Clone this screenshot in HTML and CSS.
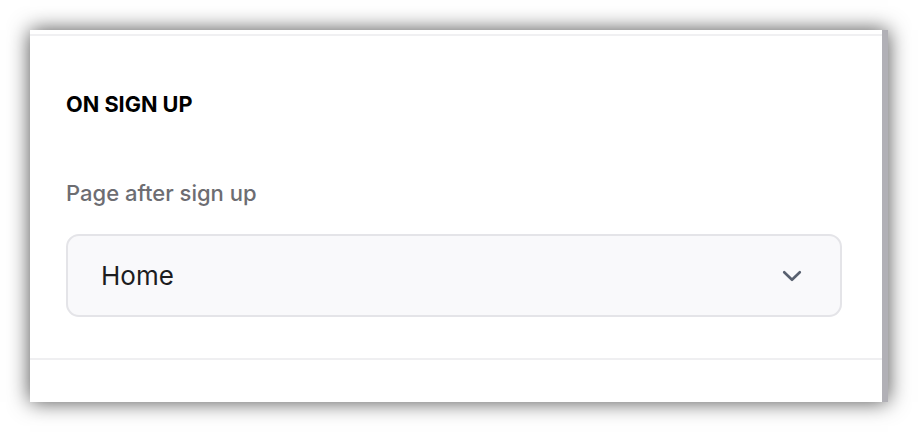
FILE: index.html
```html
<!DOCTYPE html>
<html lang="en">
<head>
<meta charset="utf-8">
<title>On sign up</title>
<link rel="stylesheet" href="styles.css">
</head>
<body>
  <div class="card">
    <div class="main">
      <div class="topbar"></div>
      <section class="section">
        <h2 class="heading">ON SIGN UP</h2>
        <label class="label" for="after">Page after sign up</label>
        <div class="select" id="after">
          <span class="value">Home</span>
          <svg class="chevron" width="20" height="12" viewBox="0 0 20 12" aria-hidden="true">
            <path d="M2.2 2.2 L10 9.8 L17.8 2.2" fill="none" stroke="#58606f" stroke-width="2.6" stroke-linecap="round" stroke-linejoin="round"/>
          </svg>
        </div>
      </section>
    </div>
    <div class="scrollbar"></div>
  </div>
</body>
</html>
```

FILE: styles.css
```css
html, body {
  margin: 0;
  padding: 0;
  background: #ffffff;
}

body {
  font-family: Inter, "Noto Sans", "Liberation Sans", sans-serif;
  padding: 30px 30px 30px 30px;
  min-height: 432px;
  box-sizing: border-box;
}

.card {
  display: flex;
  width: 858px;
  height: 372px;
  background: #ffffff;
  box-shadow: 0 0 20px rgba(0, 0, 0, 0.7);
}

.main {
  flex: 1;
  display: flex;
  flex-direction: column;
}

.topbar {
  height: 4px;
  border-bottom: 2px solid #f0f0f2;
}

.section {
  display: flex;
  flex-direction: column;
  padding: 56px 40px 41px 36px;
  border-bottom: 2px solid #efeff1;
}

.heading {
  margin: 0;
  font-size: 21.7px;
  line-height: 25px;
  font-weight: 700;
  color: #000000;
}

.label {
  margin-top: 63px;
  font-size: 22px;
  line-height: 26px;
  font-weight: 500;
  color: #6d6d72;
}

.select {
  margin-top: 28px;
  height: 79px;
  box-sizing: content-box;
  border: 2px solid #e4e4e8;
  border-radius: 13px;
  background: #f9f9fb;
  display: flex;
  align-items: center;
  justify-content: space-between;
  padding: 0 38px 0 33px;
}

.value {
  font-size: 26px;
  line-height: 32px;
  font-weight: 400;
  color: #1d1d1f;
}

.chevron {
  display: block;
}

.scrollbar {
  width: 6px;
  background: #b1b0b6;
}
```
